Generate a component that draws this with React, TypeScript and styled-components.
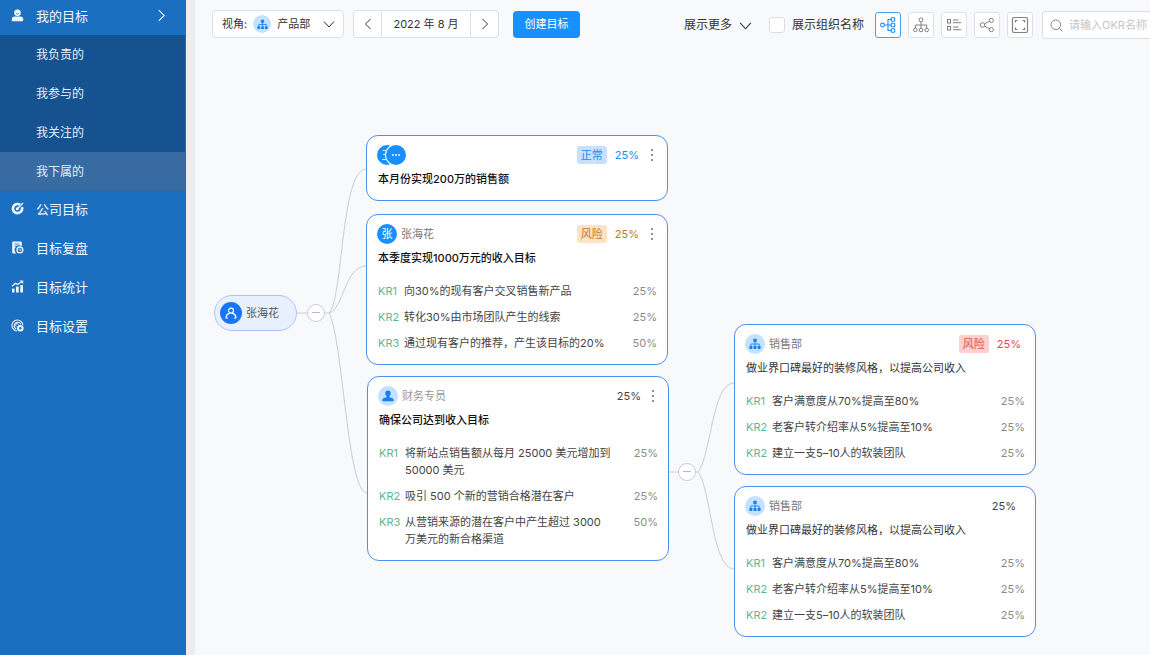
import React from 'react';
import styled, { createGlobalStyle, css } from 'styled-components';

const BLUE = '#1890ff';

const GlobalStyle = createGlobalStyle`
  *, *::before, *::after { box-sizing: border-box; }
  body {
    margin: 0;
    background: #f7f9fb;
    color: #333;
    font-family: Inter, "Noto Sans CJK SC", sans-serif;
    font-size: 11px;
    line-height: 16px;
  }
  button, input, select { font: inherit; color: inherit; margin: 0; }
  button { cursor: pointer; padding: 0; }
  svg { display: block; flex: none; }
  h2 { margin: 0; }
`;

/* ---------- shell ---------- */

const Shell = styled.div`
  display: grid;
  grid-template-columns: 186px minmax(0, 1fr);
  min-height: 100vh;
`;

const Sidebar = styled.nav`
  background: #1b6fc1;
  color: #f0f7ff;
  padding-right: 1px;
`;

const Main = styled.main`
  border-left: 9px solid #ebedf1;
  min-width: 0;
`;

const NavItem = styled.a<{ $head?: boolean }>`
  display: flex;
  align-items: center;
  height: ${(p) => (p.$head ? 35 : 39)}px;
  padding: 0 17px 4px 11px;
  color: inherit;
  font-size: 13px;
  line-height: 18px;
  text-decoration: none;
`;

const NavIcon = styled.span`
  width: 25px;
`;

const NavLabel = styled.span`
  flex: 1;
`;

const SubMenu = styled.div`
  background: #15528f;
`;

const SubItem = styled.a<{ $active?: boolean }>`
  display: flex;
  align-items: center;
  height: 39px;
  padding-left: 36px;
  color: #e3eefa;
  font-size: 12px;
  text-decoration: none;
  ${(p) => p.$active && css`background: #376ba1;`}
`;

/* ---------- toolbar ---------- */

const Toolbar = styled.header`
  display: flex;
  align-items: center;
  justify-content: space-between;
  height: 48px;
  padding-left: 17px;
`;

const Group = styled.div<{ $gap: number; $low?: boolean }>`
  display: flex;
  align-items: center;
  gap: ${(p) => p.$gap}px;
  padding-top: ${(p) => (p.$low ? 2 : 0)}px;
`;

const boxed = css`
  background: #fff;
  border: 1px solid #dcdfe5;
  border-radius: 4px;
`;

const ViewSelect = styled.label`
  ${boxed}
  display: flex;
  align-items: center;
  width: 132px;
  height: 28px;
  padding: 0 8px 0 9px;
  gap: 6px;
`;

const Select = styled.select`
  appearance: none;
  flex: 1;
  min-width: 0;
  padding: 0;
  border: 0;
  background: none;
  outline: none;
`;

const DateBox = styled.div`
  ${boxed}
  display: grid;
  grid-template-columns: 27px 1fr 27px;
  width: 146px;
  height: 28px;
  text-align: center;
  line-height: 26px;
`;

const StepButton = styled.button`
  display: grid;
  place-items: center;
  border: 0;
  background: none;
`;

const DateText = styled.span`
  border: solid #dcdfe5;
  border-width: 0 1px;
`;

const CreateButton = styled.button`
  width: 67px;
  height: 27px;
  margin-left: 5px;
  border: 0;
  border-radius: 4px;
  background: ${BLUE};
  color: #fff;
`;

const MoreButton = styled.button`
  display: flex;
  align-items: center;
  gap: 7px;
  margin-right: 10px;
  border: 0;
  background: none;
  font-size: 12px;
`;

const CheckLabel = styled.label`
  display: flex;
  align-items: center;
  gap: 7px;
  margin-right: 4px;
  font-size: 12px;
`;

const Checkbox = styled.input`
  appearance: none;
  width: 16px;
  height: 16px;
  border: 1px solid #dcdfe5;
  border-radius: 3px;
  background: #fff;
  &:checked { background: ${BLUE}; }
`;

const IconButton = styled.button<{ $active?: boolean }>`
  display: grid;
  place-items: center;
  width: 26px;
  height: 26px;
  border: 1px solid ${(p) => (p.$active ? '#4d9bec' : '#dfe1e6')};
  border-radius: 3px;
  background: #fff;
  color: ${(p) => (p.$active ? BLUE : '#808080')};
`;

const Search = styled.label`
  ${boxed}
  display: flex;
  align-items: center;
  gap: 6px;
  width: 108px;
  height: 28px;
  margin-left: 2px;
  padding-left: 7px;
  border-right: 0;
  border-radius: 4px 0 0 4px;
  color: #888;
`;

const SearchInput = styled.input`
  flex: 1;
  min-width: 0;
  padding: 0;
  border: 0;
  outline: none;
  background: none;
  &::placeholder { color: #c3c6cc; opacity: 1; }
`;

/* ---------- goal tree ---------- */

const Canvas = styled.section`
  position: relative;
  min-height: 592px;
`;

const Links = styled.svg`
  position: absolute;
  left: 0;
  top: 0;
  fill: none;
  stroke: #c9ccd4;
`;

const Placed = styled.div<{ $x: number; $y: number }>`
  position: absolute;
  left: ${(p) => p.$x}px;
  top: ${(p) => p.$y}px;
`;

const Person = styled.div`
  display: flex;
  align-items: center;
  gap: 4px;
  width: 83px;
  height: 36px;
  padding-left: 5px;
  border: 1px solid #a9c7ee;
  border-radius: 18px;
  background: #e9f0fd;
  color: #555;
`;

const Toggle = styled.button`
  display: grid;
  place-items: center;
  width: 18px;
  height: 18px;
  border: 1px solid #c9ccd4;
  border-radius: 50%;
  background: #fff;
  color: #b4b8c0;
`;

const CardBox = styled.article`
  width: 302px;
  padding: 8px 10px 12px;
  border: 1px solid #4a90ec;
  border-radius: 12px;
  background: #fff;
`;

const CardHead = styled.div`
  display: flex;
  align-items: center;
  height: 22px;
`;

const Owner = styled.span<{ $faint?: boolean }>`
  flex: 1;
  padding-left: 4px;
  color: ${(p) => (p.$faint ? '#999' : '#777')};
`;

const tones = {
  blue: ['#c9e0fc', '#1f8af0'],
  orange: ['#fde2c4', '#bf7430'],
  red: ['#ffd0d0', '#df4a4d'],
  plain: ['transparent', '#444'],
};
type Tone = keyof typeof tones;

const Tag = styled.span<{ $tone: Tone }>`
  padding: 1px 4px;
  margin-right: 8px;
  border-radius: 3px;
  background: ${(p) => tones[p.$tone][0]};
  color: ${(p) => tones[p.$tone][1]};
`;

const Progress = styled.span<{ $tone: Tone; $inset: number }>`
  margin-right: ${(p) => p.$inset}px;
  color: ${(p) => tones[p.$tone][1]};
`;

const MenuButton = styled.button`
  display: grid;
  place-items: center;
  width: 10px;
  height: 18px;
  border: 0;
  background: none;
  color: #777;
`;

const Title = styled.h2<{ $strong?: boolean }>`
  margin-top: 4px;
  padding-left: 1px;
  color: ${(p) => (p.$strong ? '#111' : '#333')};
  font-size: 11px;
  font-weight: ${(p) => (p.$strong ? 500 : 400)};
  line-height: 18px;
`;

const KrList = styled.ul`
  display: grid;
  gap: 9px;
  margin: 16px 0 0;
  padding: 0 0 0 1px;
  list-style: none;
`;

const KrRow = styled.li`
  display: grid;
  grid-template-columns: 26px 1fr auto;
  line-height: 17px;
`;

const KrNo = styled.span`
  color: #5fb591;
`;

const KrText = styled.span`
  color: #444;
  white-space: pre-line;
`;

const KrPct = styled.span`
  color: #8c8c8c;
`;

const Disc = styled.span<{ $size?: number; $bg?: string; $fg?: string }>`
  display: grid;
  place-items: center;
  flex: none;
  width: ${(p) => p.$size ?? 20}px;
  height: ${(p) => p.$size ?? 20}px;
  border-radius: 50%;
  background: ${(p) => p.$bg ?? BLUE};
  color: ${(p) => p.$fg ?? '#fff'};
`;

const DiscStack = styled.span`
  display: flex;
  & > :last-child {
    margin-left: -11px;
    box-shadow: 0 0 0 1px #fff;
  }
`;

/* ---------- icons ---------- */

const Chevron = ({ dir, size = 12 }: { dir: 'down' | 'left' | 'right'; size?: number }) => {
  const d = { down: 'M1 3.5 6 9l5-5.5', left: 'M8.5 1 3.5 6l5 5', right: 'M3.5 1l5 5-5 5' }[dir];
  return (
    <svg width={size} height={size} viewBox="0 0 12 12" fill="none" stroke="currentColor" strokeWidth="1">
      <path d={d} />
    </svg>
  );
};

const OrgSolid = ({ size = 12 }: { size?: number }) => (
  <svg width={size} height={size} viewBox="0 0 12 12" fill="currentColor">
    <rect x="4.3" y="0.8" width="3.4" height="3.2" rx="0.4" />
    <rect x="0.4" y="8" width="3" height="3" rx="0.4" />
    <rect x="4.5" y="8" width="3" height="3" rx="0.4" />
    <rect x="8.6" y="8" width="3" height="3" rx="0.4" />
    <path d="M6 4v4M1.9 8V6h8.2v2" fill="none" stroke="currentColor" strokeWidth="0.9" />
  </svg>
);

const UserSolid = () => (
  <svg width="12" height="12" viewBox="0 0 12 12" fill="currentColor">
    <path d="M6 .4c1.7 0 2.8 1.2 2.8 2.9 0 1.2-.5 2.2-1.300 2.800v1.100l3 1c.7.3 1.100.8 1.100 1.500v.8c0 .4-.3.7-.7.7H1.100c-.4 0-.7-.3-.7-.7v-.8c0-.7.4-1.200 1.100-1.500l3-1V6.100C3.700 5.500 3.200 4.500 3.200 3.300 3.200 1.600 4.300.4 6 .4Z" />
  </svg>
);

const UserLine = () => (
  <svg width="12" height="12" viewBox="0 0 12 12" fill="none" stroke="currentColor" strokeWidth="1.2" strokeLinecap="round">
    <circle cx="6" cy="3.6" r="2.5" />
    <path d="M1 11c0-2.300 1.300-3.800 3.300-4.600M11 11c0-2.300-1.300-3.800-3.300-4.600M1 11h1.600M9.400 11H11" />
  </svg>
);

const Nav1 = () => (
  <svg width="13" height="13" viewBox="0 0 13 13" fill="currentColor">
    <circle cx="6.5" cy="3.7" r="3.3" />
    <path d="M3.5 7.400h6c1.600 0 2.700 1 2.700 2.600v1c0 .8-.5 1.300-1.300 1.300H2.100C1.300 12.300.8 11.800.8 11v-1c0-1.600 1.100-2.600 2.700-2.600Z" />
    <path d="M5.200 4.300q1.300 1.300 2.600 0" fill="none" stroke="#1b6fc1" strokeWidth=".8" />
  </svg>
);

const NavTarget = () => (
  <svg width="13" height="13" viewBox="0 0 13 13" fill="none" stroke="currentColor">
    <path d="M9 2.7A4.6 4.6 0 1 0 10.9 5.2" strokeWidth="2.6" />
    <circle cx="6.3" cy="6.7" r="1.5" fill="currentColor" stroke="none" />
    <path d="M6.3 6.7 12 1" strokeWidth="1.3" />
  </svg>
);

const NavReview = () => (
  <svg width="13" height="13" viewBox="0 0 13 13" fill="currentColor">
    <path d="M2.500.5h7c.8 0 1.300.5 1.300 1.300v3.400A4.300 4.300 0 0 0 5.400 12.500H2.500c-.8 0-1.300-.5-1.300-1.300V1.800C1.200 1 1.700.5 2.500.5Z" />
    <path d="M3.500 3h5M3.500 5.200h2.500" stroke="#1b6fc1" strokeWidth=".8" />
    <circle cx="8.900" cy="8.900" r="2.900" fill="none" stroke="currentColor" strokeWidth="1.300" />
    <path d="M8.800 7.500v1.700h1.500" fill="none" stroke="currentColor" strokeWidth=".9" />
  </svg>
);

const NavStats = () => (
  <svg width="13" height="13" viewBox="0 0 13 13" fill="currentColor">
    <rect x="1" y="8.5" width="2.5" height="4" rx=".6" />
    <rect x="5" y="6.5" width="2.7" height="6" rx=".6" />
    <rect x="9.300" y="5" width="2.700" height="7.500" rx=".6" />
    <path d="M1 6.300 4.600 3.200l2 1.300L10.500 1.700" fill="none" stroke="currentColor" strokeWidth="1.200" />
    <path d="M8.500.4H12.200V4Z" />
  </svg>
);

const NavSettings = () => (
  <svg width="13" height="13" viewBox="0 0 13 13" fill="none" stroke="currentColor">
    <path d="M11.900 6A5.500 5.500 0 1 0 6 12" strokeWidth="1.100" />
    <path d="M9.800 5.200A3.500 3.500 0 1 0 5.200 9.900" strokeWidth="1.100" />
    <path d="M7.500 5.400A1.600 1.600 0 1 0 5.300 7.600" strokeWidth="1" />
    <circle cx="9.300" cy="9.300" r="2.300" strokeWidth="2" />
  </svg>
);

const TreeRight = () => (
  <svg width="16" height="16" viewBox="0 0 16 16" fill="none" stroke="currentColor" strokeWidth="1.1">
    <circle cx="2.5" cy="8" r="1.9" />
    <rect x="11.2" y=".8" width="3.500" height="3.500" rx=".5" />
    <rect x="11.2" y="6.200" width="3.500" height="3.500" rx=".5" />
    <rect x="11.2" y="11.700" width="3.500" height="3.500" rx=".5" />
    <path d="M4.400 8h6.800M11.200 2.500H8v11h3.200" />
  </svg>
);

const TreeDown = () => (
  <svg width="16" height="16" viewBox="0 0 16 16" fill="none" stroke="currentColor" strokeWidth="1">
    <rect x="6.200" y="1" width="3.600" height="3.600" rx="1" />
    <circle cx="2.300" cy="13" r="1.800" />
    <circle cx="8" cy="13" r="1.800" />
    <circle cx="13.700" cy="13" r="1.800" />
    <path d="M8 4.600v6.600M2.300 11.200V8h11.400v3.200" />
  </svg>
);

const ListIcon = () => (
  <svg width="16" height="16" viewBox="0 0 16 16" fill="none" stroke="currentColor" strokeWidth="1">
    <rect x="1.500" y="2.500" width="3" height="3.500" />
    <rect x="1.500" y="9.500" width="3" height="3.500" />
    <path d="M7 3h5.500M7 5.700h8M7 10h5.500M7 12.700h8" />
  </svg>
);

const ShareIcon = () => (
  <svg width="16" height="16" viewBox="0 0 16 16" fill="none" stroke="currentColor" strokeWidth="1">
    <circle cx="3.500" cy="8" r="2.300" />
    <circle cx="12.300" cy="3.400" r="2.100" />
    <circle cx="12.300" cy="12.600" r="2.100" />
    <path d="M5.500 6.900 10.400 4.300M5.500 9.100l4.900 2.600" />
  </svg>
);

const FullIcon = () => (
  <svg width="18" height="18" viewBox="0 0 18 18" fill="none" stroke="currentColor" strokeWidth="1.200">
    <rect x="1.500" y="1.500" width="15" height="15" rx="1.500" />
    <path d="M4.500 6.500v-2h2M11.500 4.500h2v2M13.500 11.500v2h-2M6.500 13.500h-2v-2" />
  </svg>
);

const SearchIcon = () => (
  <svg width="13" height="13" viewBox="0 0 13 13" fill="none" stroke="currentColor">
    <circle cx="5.800" cy="5.800" r="4.800" />
    <path d="m9.300 9.300 3 3" />
  </svg>
);

const Dots = () => (
  <svg width="4" height="14" viewBox="0 0 4 14" fill="currentColor">
    <circle cx="2" cy="2" r="1.100" />
    <circle cx="2" cy="7" r="1.100" />
    <circle cx="2" cy="12" r="1.100" />
  </svg>
);

const Ellipsis = () => (
  <svg width="10" height="4" viewBox="0 0 10 4" fill="currentColor">
    <circle cx="2" cy="2" r=".9" />
    <circle cx="5" cy="2" r=".9" />
    <circle cx="8" cy="2" r=".9" />
  </svg>
);

const Minus = () => (
  <svg width="8" height="2" viewBox="0 0 8 2" fill="currentColor">
    <rect width="8" height="1" />
  </svg>
);

/* ---------- data ---------- */

type Kr = [string, string, string];

interface Goal {
  x: number;
  y: number;
  avatar: React.ReactNode;
  owner?: string;
  faint?: boolean;
  tag?: string;
  tone: Tone;
  menu?: boolean;
  inset: number;
  title: string;
  strong?: boolean;
  krs?: Kr[];
}

const LIGHT = '#c4e2ff';
const ICON_BLUE = '#1a7ff0';

const salesKrs: Kr[] = [
  ['KR1', '客户满意度从70%提高至80%', '25%'],
  ['KR2', '老客户转介绍率从5%提高至10%', '25%'],
  ['KR2', '建立一支5–10人的软装团队', '25%'],
];

const goals: Goal[] = [
  {
    x: 171, y: 87, tone: 'blue', tag: '正常', menu: true, inset: 8, strong: true,
    avatar: (
      <DiscStack>
        <Disc>王</Disc>
        <Disc><Ellipsis /></Disc>
      </DiscStack>
    ),
    title: '本月份实现200万的销售额',
  },
  {
    x: 171, y: 166, tone: 'orange', tag: '风险', menu: true, inset: 8, strong: true,
    avatar: <Disc>张</Disc>,
    owner: '张海花',
    title: '本季度实现1000万元的收入目标',
    krs: [
      ['KR1', '向30%的现有客户交叉销售新产品', '25%'],
      ['KR2', '转化30%由市场团队产生的线索', '25%'],
      ['KR3', '通过现有客户的推荐，产生该目标的20%', '50%'],
    ],
  },
  {
    x: 172, y: 328, tone: 'plain', menu: true, inset: 7, strong: true,
    avatar: <Disc $bg={LIGHT} $fg={ICON_BLUE}><UserSolid /></Disc>,
    owner: '财务专员',
    faint: true,
    title: '确保公司达到收入目标',
    krs: [
      ['KR1', '将新站点销售额从每月 25000 美元增加到\n50000 美元', '25%'],
      ['KR2', '吸引 500 个新的营销合格潜在客户', '25%'],
      ['KR3', '从营销来源的潜在客户中产生超过 3000\n万美元的新合格渠道', '50%'],
    ],
  },
  {
    x: 539, y: 276, tone: 'red', tag: '风险', inset: 4,
    avatar: <Disc $bg={LIGHT} $fg={ICON_BLUE}><OrgSolid /></Disc>,
    owner: '销售部',
    title: '做业界口碑最好的装修风格，以提高公司收入',
    krs: salesKrs,
  },
  {
    x: 539, y: 438, tone: 'plain', inset: 9,
    avatar: <Disc $bg={LIGHT} $fg={ICON_BLUE}><OrgSolid /></Disc>,
    owner: '销售部',
    title: '做业界口碑最好的装修风格，以提高公司收入',
    krs: salesKrs,
  },
];

const GoalCard = ({ goal }: { goal: Goal }) => (
  <CardBox>
    <CardHead>
      {goal.avatar}
      <Owner $faint={goal.faint}>{goal.owner}</Owner>
      {goal.tag && <Tag $tone={goal.tone}>{goal.tag}</Tag>}
      <Progress $tone={goal.tone} $inset={goal.inset}>25%</Progress>
      {goal.menu && <MenuButton aria-label="更多操作"><Dots /></MenuButton>}
    </CardHead>
    <Title $strong={goal.strong}>{goal.title}</Title>
    {goal.krs && (
      <KrList>
        {goal.krs.map(([no, text, pct], i) => (
          <KrRow key={i}>
            <KrNo>{no}</KrNo>
            <KrText>{text}</KrText>
            <KrPct>{pct}</KrPct>
          </KrRow>
        ))}
      </KrList>
    )}
  </CardBox>
);

const subItems = ['我负责的', '我参与的', '我关注的', '我下属的'];

const navItems: [string, React.ReactNode][] = [
  ['公司目标', <NavTarget />],
  ['目标复盘', <NavReview />],
  ['目标统计', <NavStats />],
  ['目标设置', <NavSettings />],
];

export default function App() {
  return (
    <>
      <GlobalStyle />
      <Shell>
        <Sidebar>
          <NavItem href="#mine" $head>
            <NavIcon><Nav1 /></NavIcon>
            <NavLabel>我的目标</NavLabel>
            <Chevron dir="right" size={13} />
          </NavItem>
          <SubMenu>
            {subItems.map((label, i) => (
              <SubItem key={label} href={`#sub-${i}`} $active={i === 3}>{label}</SubItem>
            ))}
          </SubMenu>
          {navItems.map(([label, icon], i) => (
            <NavItem key={label} href={`#nav-${i}`}>
              <NavIcon>{icon}</NavIcon>
              <NavLabel>{label}</NavLabel>
            </NavItem>
          ))}
        </Sidebar>
        <Main>
          <Toolbar>
            <Group $gap={9}>
              <ViewSelect>
                视角:
                <Disc $size={18} $bg={LIGHT} $fg={ICON_BLUE}><OrgSolid size={11} /></Disc>
                <Select defaultValue="产品部">
                  <option>产品部</option>
                </Select>
                <Chevron dir="down" />
              </ViewSelect>
              <DateBox>
                <StepButton aria-label="上个月"><Chevron dir="left" /></StepButton>
                <DateText>2022 年 8 月</DateText>
                <StepButton aria-label="下个月"><Chevron dir="right" /></StepButton>
              </DateBox>
              <CreateButton>创建目标</CreateButton>
            </Group>
            <Group $gap={7} $low>
              <MoreButton>
                展示更多
                <Chevron dir="down" size={13} />
              </MoreButton>
              <CheckLabel>
                <Checkbox type="checkbox" />
                展示组织名称
              </CheckLabel>
              <IconButton $active aria-label="横向树"><TreeRight /></IconButton>
              <IconButton aria-label="纵向树"><TreeDown /></IconButton>
              <IconButton aria-label="列表"><ListIcon /></IconButton>
              <IconButton aria-label="分享"><ShareIcon /></IconButton>
              <IconButton aria-label="全屏"><FullIcon /></IconButton>
              <Search>
                <SearchIcon />
                <SearchInput aria-label="搜索" placeholder="请输入OKR名称" />
              </Search>
            </Group>
          </Toolbar>
          <Canvas>
            <Links width="841" height="592" viewBox="0 0 841 592">
              <path d="M101 265H134" />
              <path d="M134 265C148 252 146 121 171 121" />
              <path d="M134 265C148 262 150 218 171 218" />
              <path d="M134 265C148 290 152 445 172 445" />
              <path d="M474 424H503" />
              <path d="M503 424C516 408 517 335 539 335" />
              <path d="M503 424C516 440 517 521 539 521" />
            </Links>
            <Placed $x={19} $y={247}>
              <Person>
                <Disc $size={22} $bg="#1a75f5"><UserLine /></Disc>
                张海花
              </Person>
            </Placed>
            <Placed $x={112} $y={256}>
              <Toggle aria-label="收起"><Minus /></Toggle>
            </Placed>
            <Placed $x={483} $y={415}>
              <Toggle aria-label="收起"><Minus /></Toggle>
            </Placed>
            {goals.map((goal, i) => (
              <Placed key={i} $x={goal.x} $y={goal.y}>
                <GoalCard goal={goal} />
              </Placed>
            ))}
          </Canvas>
        </Main>
      </Shell>
    </>
  );
}
